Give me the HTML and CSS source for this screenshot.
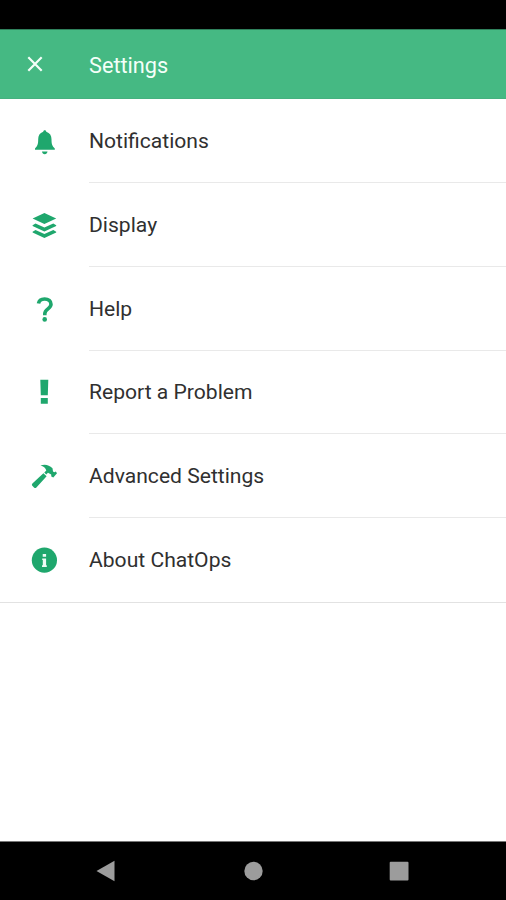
FILE: index.html
```html
<!DOCTYPE html>
<html lang="en">
<head>
<meta charset="utf-8">
<title>Settings</title>
<link rel="stylesheet" href="styles.css">
</head>
<body>
<div class="status-bar"></div>
<header class="header">
  <svg class="close" width="18" height="18" viewBox="0 0 18 18"><path d="M2.300 2.300L15.700 15.700M15.700 2.300L2.300 15.700"/></svg>
  <h1 class="title">Settings</h1>
</header>
<main class="list">
  <div class="row">
    <svg class="icon" viewBox="20 116 50 50"><path d="M44.700 130.200c1 0 1.500.6 1.600 1.600 3.600 1.100 5.200 3.900 5.200 7.500 0 5 .7 6.800 3.300 9.200v1.300H35v-1.300c2.500-2.400 3.200-4.200 3.200-9.200 0-3.600 1.500-6.400 5-7.500.1-1 .6-1.600 1.500-1.600zM42 151.500h5.500c-.3 1.700-1.300 2.700-2.750 2.700s-2.450-1-2.750-2.700z"/></svg>
    <div class="label">Notifications</div>
  </div>
  <div class="row">
    <svg class="icon" viewBox="20 200 50 50"><path d="M44.400 213L56.200 218.600l-11.800 5.400L32.600 218.600zM32.600 225.300l2.900-1.700 8.900 3.900 8.900-3.900 2.900 1.700v.8l-11.800 5.400-11.800-5.400zM32.600 231.800l2.900-1.700 8.900 3.900 8.900-3.900 2.900 1.700v.8l-11.800 5.400-11.800-5.400z"/></svg>
    <div class="label">Display</div>
  </div>
  <div class="row">
    <svg class="icon" viewBox="20 284 50 50"><path class="stroke" d="M38.500 303.500C39 300.200 41.500 299 44.600 299C48.500 299 51 301.200 51 304.300C51 308.800 44.800 308.900 44.800 313.700V315.300"/><circle cx="44.700" cy="319.400" r="2.300"/></svg>
    <div class="label">Help</div>
  </div>
  <div class="row short">
    <svg class="icon" viewBox="20 368 50 50"><path d="M40.300 379.700h8L47.800 395.300h-7zM40.800 398h7v5.700h-7z"/></svg>
    <div class="label">Report a Problem</div>
  </div>
  <div class="row">
    <svg class="icon" viewBox="20 451 50 50"><path d="M40.500 465.600C44.500 463.700 49 464.600 52.500 468.300L53 471.500L54.300 472.300L55.800 471.500L57 473.300L53.300 477.500L51.300 476.500L51.200 474.600L48 472.700L46.200 474.600L44.300 472.500L46.300 470.500C45.600 468 43.500 466.400 40.500 465.600zM43.400 473.200L46.600 476.200L36.400 487.500Q35.200 488.600 34 487.500L32.300 485.800Q31.300 484.700 32.400 483.500z"/></svg>
    <div class="label">Advanced Settings</div>
  </div>
  <div class="row last">
    <svg class="icon" viewBox="20 535 50 50"><circle cx="44.400" cy="560.200" r="12.600"/><path class="cutout" d="M42.700 554h3.400v2.700h-3.400zM42.200 558.400h3.900v6.800h.7v1.700h-4.800v-1.700h.8v-5.200h-.6z"/></svg>
    <div class="label">About ChatOps</div>
  </div>
</main>
<nav class="nav-bar">
  <svg class="nav-icon" viewBox="0 0 22 22"><path d="M19.500.7v20.600L1.500 11z"/></svg>
  <svg class="nav-icon" viewBox="0 0 22 22"><circle cx="11.500" cy="11" r="9.200"/></svg>
  <svg class="nav-icon" viewBox="0 0 22 22"><rect x="1.700" y="1.700" width="18.800" height="18.800" rx="1"/></svg>
</nav>
</body>
</html>
```
FILE: styles.css
```css
* {
  box-sizing: border-box;
}

body {
  margin: 0;
  height: 900px;
  display: flex;
  flex-direction: column;
  background: #fff;
  color: #303030;
  font-family: Roboto, sans-serif;
}

.status-bar {
  height: 30px;
  background: #000;
  border-bottom: 1px solid #2f815c;
}

.header {
  height: 69px;
  display: flex;
  align-items: center;
  padding-left: 26px;
  background: #45b983;
  border-bottom: 1px solid #45b17f;
  color: #f4fff9;
}

.close {
  fill: none;
  stroke: #f4fff9;
  stroke-width: 2.200;
}

.title {
  margin: 3px 0 0 45px;
  font-size: 21.700px;
  font-weight: 400;
  line-height: 28px;
}

.list {
  flex: 1;
}

.row {
  height: 84px;
  display: flex;
  padding-left: 20px;
}

.row.short {
  height: 83px;
}

.icon {
  width: 50px;
  height: 50px;
  flex: none;
  margin: 17px 19px 0 0;
  fill: #1fa76d;
}

.stroke {
  fill: none;
  stroke: #1fa76d;
  stroke-width: 3.600;
}

.cutout {
  fill: #eefbf5;
}

.label {
  flex: 1;
  padding-top: 28px;
  border-bottom: 1px solid #e9e9e9;
  font-size: 21.100px;
  line-height: 28px;
}

.short .label {
  padding-top: 27px;
}

.last {
  height: 85px;
  border-bottom: 1px solid #e2e2e2;
}

.last .label {
  border-bottom: 0;
}

.nav-bar {
  height: 59px;
  display: flex;
  justify-content: space-between;
  align-items: center;
  padding: 0 96px 0 95px;
  background: #000;
  border-top: 1px solid #777;
}

.nav-icon {
  width: 22px;
  height: 22px;
  fill: #9c9c9c;
}
```
